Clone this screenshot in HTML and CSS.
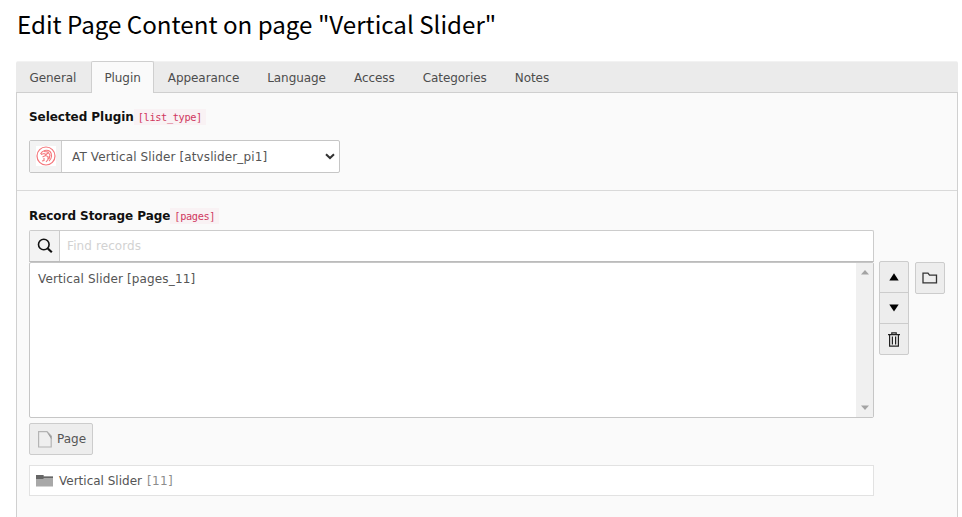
FILE: index.html
```html
<!DOCTYPE html>
<html lang="en">
<head>
<meta charset="utf-8">
<title>Edit Page Content</title>
<link rel="stylesheet" href="styles.css">
</head>
<body>
<h1>Edit Page Content on page "Vertical Slider"</h1>
<nav class="tabs">
  <a class="tab">General</a>
  <a class="tab active">Plugin</a>
  <a class="tab">Appearance</a>
  <a class="tab">Language</a>
  <a class="tab">Access</a>
  <a class="tab">Categories</a>
  <a class="tab">Notes</a>
</nav>
<main class="panel">
  <section class="plugin">
    <div class="label"><b>Selected Plugin</b><code class="list">[list_type]</code></div>
    <div class="select">
      <span class="addon"><svg width="20" height="20" viewBox="0 0 20 20" fill="none" stroke="#f4777c"><rect width="20" height="20" fill="#fff" stroke="none"/><circle cx="10" cy="10" r="9" stroke-width="1.200"/><path d="M4.500 8C6 4.500 11 3 14 5.500c2.500 2.500 2 7-1 9.500M5 8.500l3-1 2 1 2-1.500M6.500 11l3-1.500 2.500 1v3l-2 2.500M8 12v2.500l-2 .5M8 5.500l4 .5 2 3-1 4" stroke-width="1.100"/></svg></span>
      <span class="value">AT Vertical Slider [atvslider_pi1]</span>
      <svg class="chevron" width="10" height="7" viewBox="0 0 10 7" fill="none" stroke="#333" stroke-width="2"><path d="M1 1.200 5 5l4-3.800"/></svg>
    </div>
  </section>
  <section class="storage">
    <div class="label"><b>Record Storage Page</b><code class="pages">[pages]</code></div>
    <div class="picker">
      <div class="fields">
        <div class="search">
          <span class="glass"><svg width="16" height="16" viewBox="0 0 16 16" fill="none" stroke="#111"><circle cx="6.800" cy="6.500" r="5.300" stroke-width="1.600"/><path d="m10.800 10.500 4 3.800" stroke-width="2.200"/></svg></span>
          <span class="placeholder">Find records</span>
        </div>
        <div class="listbox">
          <span class="option">Vertical Slider [pages_11]</span>
          <span class="scrollbar">
            <svg width="8" height="5" viewBox="0 0 8 5"><path d="M0 4.500 4 0l4 4.500z" fill="#a3a3a3"/></svg>
            <svg width="8" height="5" viewBox="0 0 8 5"><path d="M0 .5h8L4 5z" fill="#a3a3a3"/></svg>
          </span>
        </div>
      </div>
      <div class="group">
        <span class="btn"><svg width="10" height="8" viewBox="0 0 10 8"><path d="M.3 7.500 5 .3l4.700 7.200z"/></svg></span>
        <span class="btn"><svg width="10" height="8" viewBox="0 0 10 8"><path d="M.3.500h9.400L5 7.500z"/></svg></span>
        <span class="btn"><svg width="12" height="15" viewBox="0 0 12 15" fill="none" stroke="#222" stroke-width="1.200"><path d="M0 2.600h12M3.800 2.500V.8h4.400v1.700M1.600 3v11.200h8.800V3M4.400 4.500v8M7.600 4.500v8"/></svg></span>
      </div>
      <div class="group folder">
        <span class="btn"><svg width="16" height="12" viewBox="0 0 16 12" fill="none" stroke="#333" stroke-width="1.300"><path d="M1 10.800V1.200h5l1.500 2h7v7.600z"/></svg></span>
      </div>
    </div>
    <div class="page-btn"><svg width="14" height="17" viewBox="0 0 14 17"><path d="M.6.600H9L13.200 5v11H.6z" fill="#efefef" stroke="#b4b4b4" stroke-width="1.200"/><path d="M8.500.500 13.500 5.500v3z" fill="#999"/></svg><span>Page</span></div>
    <div class="record"><svg width="17" height="13" viewBox="0 0 17 13"><path d="M0 1h7.500v1.500H17V12.500H0z" fill="#a8a8a8"/><path d="M0 1h7.500v1.500H17V4H8L7 5H0z" fill="#666"/></svg><span class="name">Vertical Slider</span><span class="uid">[11]</span></div>
  </section>
</main>
</body>
</html>
```

FILE: styles.css
```css
* { box-sizing: border-box; }
body {
  margin: 0;
  height: 517px;
  overflow: hidden;
  padding: 0 4px 0 16px;
  background: #fff;
  color: #555;
  font: 12px/18px "DejaVu Sans", sans-serif;
  display: flex;
  flex-direction: column;
}
svg { display: block; flex: none; }
h1 {
  margin: 0;
  padding: 6px 0 0 1px;
  height: 61px;
  flex: none;
  color: #000;
  font: 400 24.150px/36px "Noto Sans CJK SC", sans-serif;
  white-space: nowrap;
}
.tabs {
  height: 32px;
  flex: none;
  display: flex;
  background: #ebebeb;
  border-top: 1px solid #f2f2f2;
  border-bottom: 1px solid #cfcfcf;
  border-radius: 2px 2px 0 0;
  color: #4d4d4d;
}
.tab { padding: 7px 14.500px 0 13.500px; white-space: nowrap; letter-spacing: -.06px; }
.tab.active {
  height: 32px;
  margin-top: -1px;
  padding: 7px 12.500px 0;
  background: #fafafa;
  border: 1px solid #cfcfcf;
  border-bottom: 0;
  border-radius: 2px 2px 0 0;
}
.panel {
  flex: 1;
  background: #fafafa;
  border: solid #d0d0d0;
  border-width: 0 1px;
}
.plugin { height: 98px; padding: 14px 12px 0; border-bottom: 1px solid #d9d9d9; }
.storage { padding: 15px 12px 0; }
.label { height: 20px; display: flex; align-items: center; color: #111; white-space: nowrap; letter-spacing: -.05px; }
code {
  padding: 0 4px;
  height: 16px;
  background: #f9f2f4;
  color: #d03860;
  font: 10.300px/17px "DejaVu Sans Mono", monospace;
  letter-spacing: -.37px;
}
.select {
  width: 311px;
  height: 33px;
  margin-top: 13px;
  display: flex;
  align-items: center;
  background: #fff;
  border: 1px solid #c6c6c6;
  border-radius: 2px;
}
.addon, .glass {
  height: 100%;
  display: flex;
  align-items: center;
  justify-content: center;
  background: #f3f3f3;
  border-right: 1px solid #ccc;
}
.addon { width: 32px; padding-bottom: 2px; }
.value { flex: 1; padding-left: 10px; white-space: nowrap; letter-spacing: .12px; }
.chevron { margin-right: 4px; }
.picker { display: flex; align-items: flex-end; height: 192px; }
.fields { width: 845px; height: 188px; flex: none; }
.search {
  height: 32px;
  display: flex;
  align-items: center;
  background: #fff;
  border: 1px solid #ccc;
  border-bottom-color: #bbb;
  border-radius: 2px 2px 0 0;
}
.glass { width: 30px; }
.placeholder { padding-left: 7px; color: #d2d2d2; letter-spacing: .1px; }
.listbox {
  height: 156px;
  display: flex;
  justify-content: space-between;
  background: #fff;
  border: 1px solid #c6c6c6;
  border-radius: 2px;
}
.option { padding: 7px 0 0 8px; letter-spacing: .14px; }
.scrollbar {
  width: 17px;
  display: flex;
  flex-direction: column;
  align-items: center;
  justify-content: space-between;
  padding: 7px 0;
  background: #f0f0f0;
}
.group {
  width: 30px;
  flex: none;
  margin: 0 0 63px 5px;
  background: #ededed;
  border: 1px solid #ccc;
  border-radius: 2px;
}
.group.folder { margin: 0 0 124px 6px; }
.btn { height: 30px; display: flex; align-items: center; justify-content: center; }
.btn + .btn { border-top: 1px solid #ccc; height: 31px; }
.page-btn {
  width: 64px;
  height: 32px;
  margin-top: 5px;
  padding-left: 8px;
  display: flex;
  align-items: center;
  gap: 5px;
  background: #ededed;
  border: 1px solid #ccc;
  border-radius: 2px;
}
.record {
  width: 845px;
  height: 31px;
  margin-top: 10px;
  padding-left: 6px;
  display: flex;
  align-items: center;
  background: #fff;
  border: 1px solid #e2e2e2;
}
.name { margin-left: 6px; }
.uid { margin-left: 5px; color: #8c8c8c; letter-spacing: .4px; }
```
